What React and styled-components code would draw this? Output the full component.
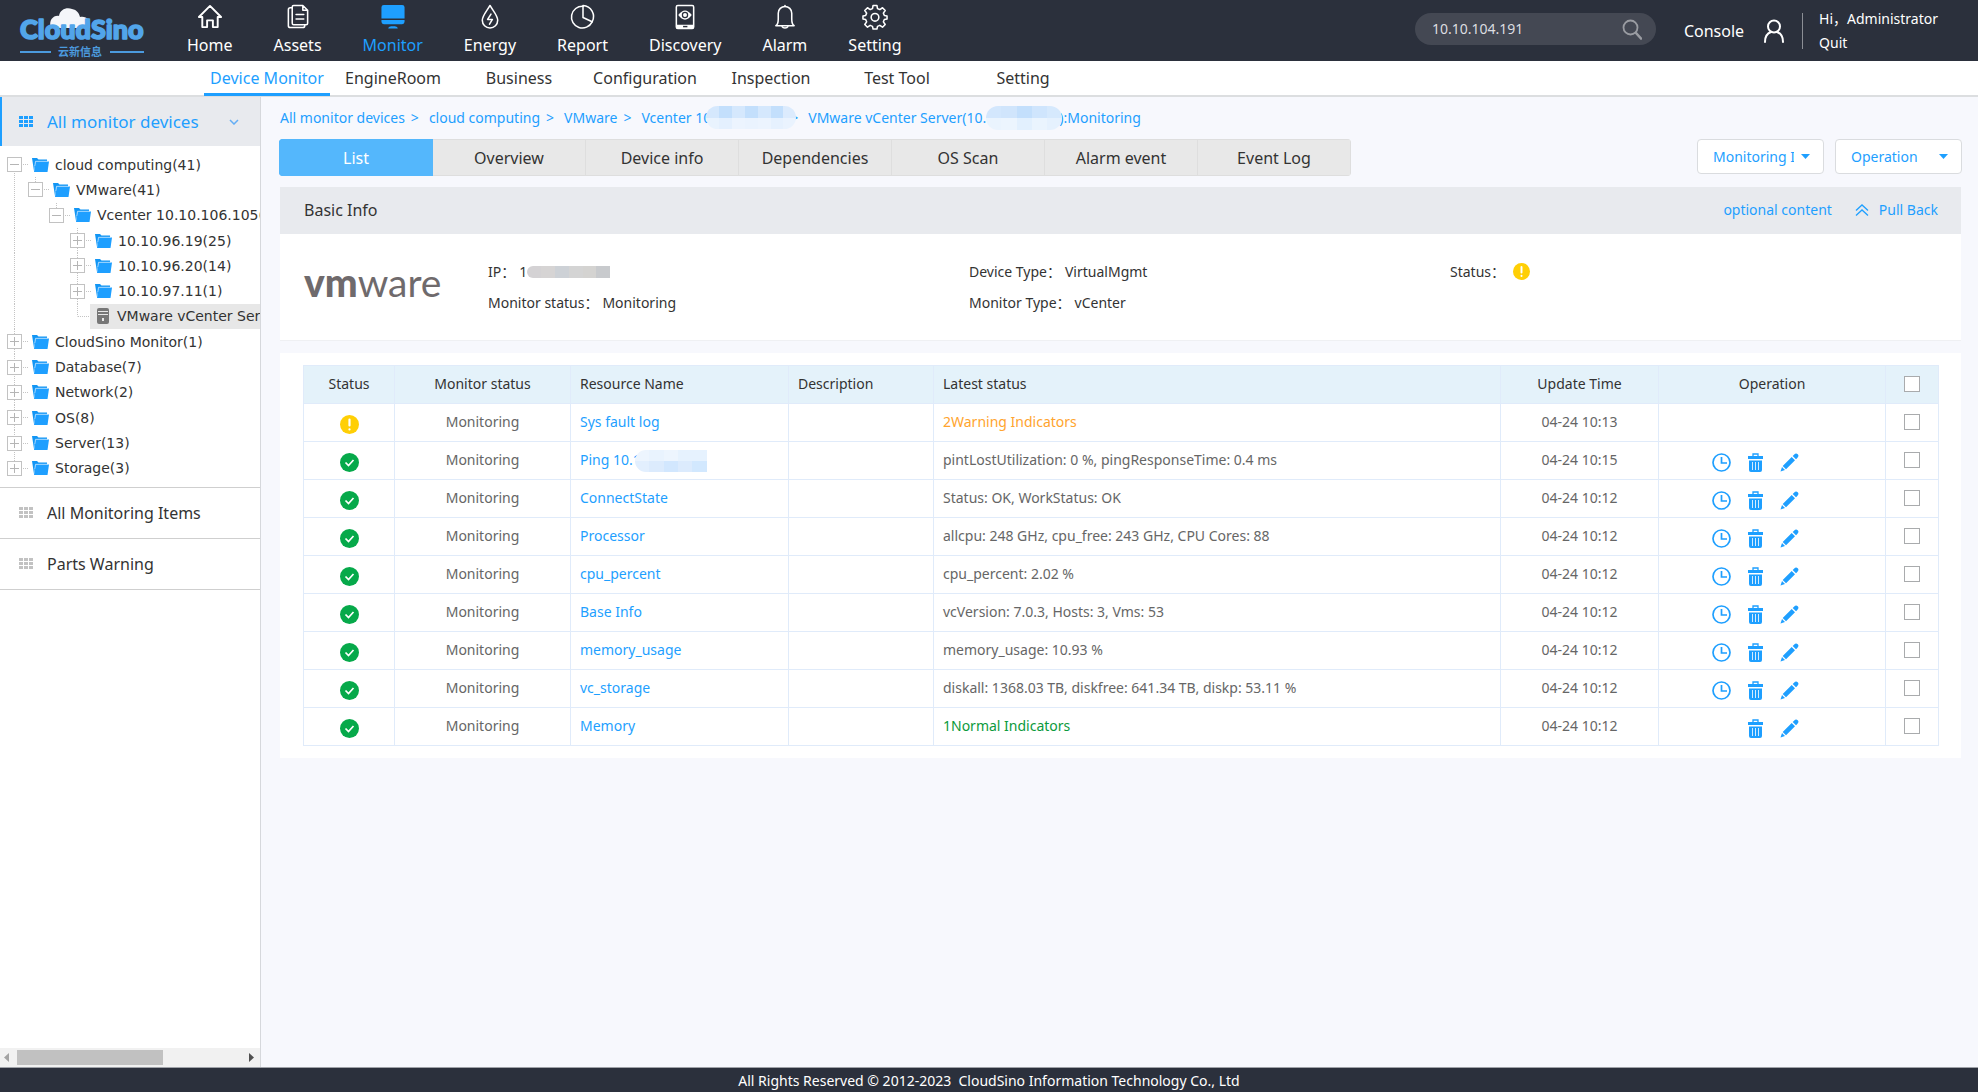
import React from "react";
import styled, { createGlobalStyle, css } from "styled-components";

const blue = "#1e9fff";
const sans = `"Noto Sans", "Noto Sans CJK SC", sans-serif`;

const GlobalStyle = createGlobalStyle`
  *, *::before, *::after { box-sizing: border-box; }
  body { margin: 0; font-family: ${sans}; font-size: 14px; line-height: 20px; color: #333; background: #f7f8fd; }
  a { color: inherit; text-decoration: none; }
  button, input, select { font: inherit; color: inherit; }
  button { padding: 0; border: 0; background: none; cursor: pointer; }
  svg { display: block; flex: none; }
`;

const Page = styled.div`
  display: flex;
  flex-direction: column;
  min-height: 100vh;
`;

/* ---------- Top bar ---------- */

const TopBar = styled.header`
  display: flex;
  align-items: center;
  height: 61px;
  padding-right: 40px;
  background: #2b303c;
  color: #fff;
`;

const LogoLink = styled.a`
  margin-left: 18px;
`;

const MainNav = styled.nav`
  display: flex;
  gap: 41px;
  margin-left: 39px;
`;

const NavLink = styled.a`
  display: flex;
  flex-direction: column;
  align-items: center;
  gap: 3px;
  font-size: 16px;
  line-height: 24px;
  color: ${(p) => (p.$active ? blue : "#fff")};
`;

const SearchBox = styled.form`
  display: flex;
  align-items: center;
  width: 241px;
  height: 32px;
  margin-left: auto;
  margin-bottom: 3px;
  padding: 0 14px 0 17px;
  border-radius: 16px;
  background: #444853;
`;

const SearchInput = styled.input`
  flex: 1;
  min-width: 0;
  padding: 0;
  border: 0;
  outline: 0;
  background: none;
  font-size: 14px;
  color: #dcdde0;
`;

const ConsoleLink = styled.a`
  display: flex;
  align-items: center;
  gap: 19px;
  margin-left: 28px;
  font-size: 16px;
`;

const UserBox = styled.div`
  display: flex;
  flex-direction: column;
  justify-content: space-between;
  height: 36px;
  margin-left: 17px;
  padding-left: 16px;
  border-left: 1px solid #8b8e95;
`;

const UserLine = styled.span`
  font-size: 14px;
  line-height: 12px;
`;

/* ---------- Second navigation row ---------- */

const SubNav = styled.nav`
  display: flex;
  height: 36px;
  padding-left: 204px;
  background: #fff;
  border-bottom: 2px solid #dcdee0;
`;

const SubNavLink = styled.a`
  width: 126px;
  height: 35px;
  border-bottom: 3px solid ${(p) => (p.$active ? blue : "transparent")};
  font-size: 16px;
  line-height: 34px;
  text-align: center;
  white-space: nowrap;
  color: ${(p) => (p.$active ? blue : "#333")};
`;

const Body = styled.div`
  display: flex;
  flex: 1;
`;

/* ---------- Sidebar ---------- */

const Sidebar = styled.aside`
  display: flex;
  flex-direction: column;
  width: 261px;
  flex: none;
  overflow: hidden;
  background: #fff;
  border-right: 1px solid #d6d8dc;
`;

const SideHeading = styled.button`
  display: flex;
  align-items: center;
  height: 49px;
  padding: 0 21px 0 17px;
  border-left: 2px solid ${blue};
  background: #e8eaee;
  font-size: 17px;
  color: ${blue};
`;

const SideLink = styled.a`
  display: flex;
  align-items: center;
  height: 51px;
  padding-left: 19px;
  border-bottom: 1px solid #cfcfcf;
  font-size: 16px;
  color: #333;
`;

const SideLabel = styled.span`
  flex: 1;
  margin-left: 14px;
  text-align: left;
`;

const Tree = styled.ul`
  display: grid;
  grid-auto-rows: 1fr;
  height: 342px;
  margin: 0;
  padding: 6px 0 6px 7px;
  list-style: none;
  border-bottom: 1px solid #cfcfcf;
`;

const TreeRow = styled.li`
  display: flex;
  min-width: 0;
  white-space: nowrap;
  overflow: hidden;
  font-family: "DejaVu Sans", sans-serif;
  font-size: 14px;
`;

const dots = "repeating-linear-gradient(to bottom, #c4c4c4 0 1px, transparent 1px 2px)";
const dotsAcross = "repeating-linear-gradient(to right, #c4c4c4 0 1px, transparent 1px 2px)";

const guides = {
  full: css`background: ${dots} 7px 0 / 1px 100% no-repeat;`,
  top: css`background: ${dots} 7px 0 / 1px 50% no-repeat;`,
  bottom: css`background: ${dots} 7px 100% / 1px 50% no-repeat;`,
};

const GuideCell = styled.span`
  display: flex;
  align-items: center;
  width: 15px;
  margin-right: 6px;
  flex: none;
  ${(p) => guides[p.$line]}
`;

const Expander = styled.button`
  display: flex;
  align-items: center;
  justify-content: center;
  width: 15px;
  height: 15px;
  border: 1px solid #c2c2c2;
  background: #fff;
`;

const Connector = styled.span`
  align-self: center;
  flex: none;
  width: ${(p) => (p.$long ? 12 : 5)}px;
  height: 1px;
  margin-left: ${(p) => (p.$long ? -13 : -5)}px;
  margin-right: ${(p) => (p.$long ? 0 : 4)}px;
  background: ${dotsAcross};
`;

const TreeLink = styled.a`
  display: flex;
  align-items: center;
  flex: none;
  gap: 6px;
  ${(p) =>
    p.$selected &&
    css`
      gap: 8px;
      padding-left: 7px;
      background: #e7e7e7;
    `}
`;

const ScrollTrack = styled.div`
  display: flex;
  align-items: center;
  gap: 8px;
  height: 19px;
  margin-top: auto;
  padding: 0 6px 0 4px;
  background: #f1f1f1;
`;

const ScrollThumb = styled.div`
  width: 146px;
  height: 15px;
  margin-right: auto;
  background: #c1c1c1;
`;

/* ---------- Main column ---------- */

const Main = styled.main`
  flex: 1;
  min-width: 0;
  padding: 9px 17px 0 19px;
`;

const Crumbs = styled.nav`
  display: flex;
  height: 24px;
  font-size: 14px;
  line-height: 24px;
  white-space: nowrap;
  color: ${blue};
`;

const CrumbArrow = styled.span`
  margin: 0 10px 0 ${(p) => (p.$tight ? 0 : 6)}px;
`;

const Mosaic = styled.span`
  display: inline-grid;
  position: relative;
  grid-template-columns: repeat(${(p) => p.$columns}, 1fr);
  width: ${(p) => p.$width}px;
  height: ${(p) => p.$height}px;
  margin: ${(p) => p.$margin};
  flex: none;
  vertical-align: middle;
  overflow: hidden;
  border-radius: ${(p) => p.$radius};
`;

const MosaicCell = styled.i`
  background: ${(p) => p.$color};
`;

const Toolbar = styled.div`
  display: flex;
  align-items: flex-start;
  gap: 11px;
  margin: 9px -1px 11px;
`;

const Tabs = styled.div`
  display: flex;
  width: 1072px;
  margin-right: auto;
  border-radius: 4px;
  overflow: hidden;
`;

const Tab = styled.button`
  flex: 1;
  height: 37px;
  border: 1px solid ${(p) => (p.$active ? "#54b7fc" : "#dedede")};
  border-left-width: ${(p) => (p.$first ? 1 : 0)}px;
  background: ${(p) => (p.$active ? "#54b7fc" : "#e8e8e8")};
  font-size: 16px;
  color: ${(p) => (p.$active ? "#fff" : "#333")};
`;

const SelectWrap = styled.label`
  display: grid;
  align-items: center;
  width: 127px;
  height: 35px;
  > * { grid-area: 1 / 1; }
  > svg { justify-self: end; margin-right: 14px; pointer-events: none; }
`;

const Select = styled.select`
  width: 100%;
  height: 100%;
  padding: 0 29px 0 15px;
  appearance: none;
  border: 1px solid #dadcdf;
  border-radius: 4px;
  background: #fff;
  font-size: 14px;
  color: ${blue};
`;

const PanelHeader = styled.div`
  display: flex;
  align-items: center;
  height: 47px;
  padding: 0 23px 2px 24px;
  background: #e8eaee;
`;

const PanelTitle = styled.h2`
  margin: 0 auto 0 0;
  font-size: 16px;
  font-weight: 400;
`;

const PanelAction = styled.button`
  display: flex;
  align-items: center;
  gap: 10px;
  margin-left: 23px;
  font-size: 14px;
  color: ${blue};
`;

const InfoPanel = styled.div`
  display: grid;
  grid-template-columns: 184px repeat(3, 1fr);
  padding: 22px 30px 22px 24px;
  background: #fff;
  border-bottom: 1px solid #eff0f3;
`;

const VendorLogo = styled.div`
  align-self: center;
  padding-bottom: 10px;
  font-family: Lato, sans-serif;
  font-size: 39px;
  line-height: 48px;
  color: #6f6a6c;
  b { font-weight: 900; }
`;

const InfoColumn = styled.dl`
  margin: 0;
`;

const InfoRow = styled.div`
  display: flex;
  align-items: center;
  gap: ${(p) => (p.$wide ? 8 : 4)}px;
  height: 31px;
`;

const InfoTerm = styled.dt`
  margin: 0;
`;

const InfoValue = styled.dd`
  display: flex;
  align-items: center;
  margin: 0;
`;

const TablePanel = styled.section`
  margin-top: 12px;
  padding: 12px 22px 12px 23px;
  background: #fff;
`;

const Table = styled.table`
  width: 100%;
  table-layout: fixed;
  border-collapse: collapse;
  color: #666;
`;

const Col = styled.col`
  width: ${(p) => (p.$width ? p.$width + "px" : "auto")};
`;

const cell = css`
  height: 38px;
  padding: 0 9px 1px;
  border: 1px solid #e0ebfa;
  font-size: 14px;
  font-weight: 400;
  text-align: ${(p) => (p.$center ? "center" : "left")};
`;

const HeadCell = styled.th`
  ${cell}
  background: #e4f2fa;
  color: #333;
`;

const Cell = styled.td`
  ${cell}
  color: ${(p) => p.$color || "#666"};
  > svg { margin: 4px auto 0; }
`;

const ResourceLink = styled.a`
  color: ${blue};
`;

const Actions = styled.div`
  display: flex;
  justify-content: flex-end;
  gap: 15px;
  padding: 4px 77px 0 0;
`;

const IconButton = styled.button`
  display: flex;
  justify-content: center;
  width: 19px;
  height: 19px;
  color: ${blue};
`;

const Checkbox = styled.input`
  display: block;
  width: 16px;
  height: 16px;
  margin: 0 auto;
  appearance: none;
  border: 1px solid #a9abad;
  background: #fff;
`;

const Footer = styled.footer`
  height: 25px;
  background: #2b303c;
  border-top: 1px solid #9fa2a8;
  font-size: 14px;
  line-height: 25px;
  text-align: center;
  white-space: pre;
  color: #fff;
`;

/* ---------- Drawings ---------- */

const BrandLogo = () => (
  <svg width="130" height="58" viewBox="0 0 130 58" role="img" aria-label="CloudSino">
    <path d="M33 26c-3-8 3-13 8-12 1-7 8-9 13-7 5 1 7 4 8 8 6-1 11 2 10 11z" fill="#f4f6fa" />
    <text x="2" y="37" fontFamily="Lato, sans-serif" fontWeight="900" fontSize="27" fill="#52a5ea" stroke="#52a5ea" strokeWidth="1.600" strokeLinejoin="round">CloudSino</text>
    <path d="M2 50h31M92 50h34" stroke="#4b9ade" strokeWidth="2" />
    <text x="40" y="54" fontFamily="Noto Sans CJK SC, sans-serif" fontWeight="700" fontSize="11" fill="#4b9ade">云新信息</text>
  </svg>
);

const line = { fill: "none", stroke: "currentColor", strokeWidth: 1.6, strokeLinejoin: "round", strokeLinecap: "round" };

const navIcons = {
  home: (
    <g {...line} strokeWidth="2">
      <path d="M1.500 13.500 13 2l11.500 11.500H21V24h-5v-7h-6v7H5V13.500z" />
    </g>
  ),
  assets: (
    <g {...line}>
      <path d="M7 5.500V3a1.500 1.500 0 0 1 1.500-1.500H18l5 5V20a1.500 1.500 0 0 1-1.500 1.500H8.500A1.500 1.500 0 0 1 7 20z M18 1.500v5h5" />
      <path d="M7 4H5a2 2 0 0 0-2 2v16.500a2 2 0 0 0 2 2h13a2 2 0 0 0 2-2v-.5M11 11h8M11 15.500h8" />
    </g>
  ),
  monitor: (
    <g fill="currentColor">
      <path d="M3.500 1h19A2.500 2.500 0 0 1 25 3.500V15H1V3.500A2.500 2.500 0 0 1 3.500 1zM1 16.500h24v2a2.500 2.500 0 0 1-2.500 2.500h-19A2.500 2.500 0 0 1 1 18.500zM8 25.500q0-2 3-2.500h4q3 .5 3 2.500z" />
    </g>
  ),
  energy: (
    <g {...line}>
      <path d="M13 1.500C10 7 5 12 5 17a8 8 0 0 0 16 0c0-5-5-10-8-15.500z" />
      <path d="M14 10.500 10.500 16h5L12.500 21" />
    </g>
  ),
  report: (
    <g {...line}>
      <path d="M13 2.300A11.300 11.300 0 1 0 22.500 18.500" />
      <path d="M13 1.500a11.500 11.500 0 0 1 9.500 17L13 14z" />
    </g>
  ),
  discovery: (
    <g>
      <rect x="4" y="1.500" width="18" height="24" rx="1.500" {...line} />
      <path d="M4 21.500h18v3a1 1 0 0 1-1 1H5a1 1 0 0 1-1-1z" fill="currentColor" />
      <path d="M11 22.700h4.500v1.500H11z" fill="#2b303c" />
      <path d="M6 11.500q7-9.500 14 0q-7 9.500-14 0z" fill="currentColor" />
      <circle cx="13" cy="11.500" r="2.700" fill="none" stroke="#2b303c" strokeWidth="1.300" />
    </g>
  ),
  alarm: (
    <g {...line}>
      <path d="M3.500 22.500c2.500-1.500 2.500-4 2.500-7V9.500a7 7 0 0 1 14 0v6c0 3 0 5.500 2.500 7z" />
      <path d="M13 2.500v-1M10 23.500a3.200 2.200 0 0 0 6 0" />
    </g>
  ),
  setting: (
    <g {...line}>
      <path d="M11 1.500h4l.6 3.300 2.400 1 2.800-1.900 2.800 2.800-1.900 2.800 1 2.400 2.800.6v3l-2.800.6-1 2.400 1.900 2.800-2.800 2.800-2.800-1.900-2.400 1-.6 2.800h-4l-.6-2.800-2.400-1-2.800 1.900-2.800-2.800 1.900-2.800-1-2.400-2.800-.6v-3l2.800-.6 1-2.400-1.900-2.800 2.800-2.800L8 5.800l2.400-1z" />
      <circle cx="13" cy="13.800" r="4" />
    </g>
  ),
};

const NavIcon = ({ name }) => (
  <svg width="26" height="26" viewBox="0 0 26 27" aria-hidden="true">{navIcons[name]}</svg>
);

const SearchIcon = () => (
  <svg width="20" height="21" viewBox="0 0 20 21" fill="none" stroke="#9a9ca2" aria-hidden="true">
    <circle cx="8.500" cy="8.500" r="7" strokeWidth="1.800" />
    <path d="m14 14 5 5.500" strokeWidth="2.600" strokeLinecap="round" />
  </svg>
);

const PersonIcon = () => (
  <svg width="22" height="24" viewBox="0 0 22 24" fill="none" stroke="#fff" strokeWidth="2" strokeLinecap="round" aria-hidden="true">
    <circle cx="11" cy="7.500" r="6" />
    <path d="M2 23q0-8 6-10M20 23q0-8-6-10" />
  </svg>
);

const GridIcon = () => (
  <svg width="14" height="12" viewBox="0 0 14 12" fill="currentColor" aria-hidden="true">
    {[0, 5, 10].map((x) => [0, 4, 8].map((y) => <rect key={`${x}-${y}`} x={x} y={y} width="4" height="3" />))}
  </svg>
);

const MutedGrid = styled.span`
  color: #c2c2c2;
`;

const ChevronIcon = () => (
  <svg width="10" height="6" viewBox="0 0 10 6" fill="none" stroke="#64aef5" strokeWidth="1.500" aria-hidden="true">
    <path d="m1 1 4 4 4-4" />
  </svg>
);

const SignIcon = ({ open }) => (
  <svg width="9" height="9" viewBox="0 0 9 9" stroke="#b5b5b5" aria-hidden="true">
    <path d={open ? "M0 4.500h9" : "M0 4.500h9M4.500 0v9"} />
  </svg>
);

const FolderIcon = () => (
  <svg width="17" height="14" viewBox="0 0 17 14" aria-hidden="true">
    <path d="M0 0h5l1.500 1.500H15v2H3.500L2 13z" fill="#1296f5" />
    <path d="M3.500 3.500H17L15.500 14H2z" fill={blue} />
    <path d="M2.800 8 3.500 3.300H16" fill="none" stroke="#b9e0ff" strokeWidth=".8" />
  </svg>
);

const ServerIcon = () => (
  <svg width="12" height="16" viewBox="0 0 12 16" aria-hidden="true">
    <rect width="12" height="16" rx="2" fill="#777" />
    <path d="M1 3.500h10M1 6.500h10" stroke="#e7e7e7" />
    <rect x="5" y="10" width="2" height="3" fill="#e7e7e7" />
  </svg>
);

const ArrowIcon = ({ left }) => (
  <svg width="5" height="9" viewBox="0 0 5 9" fill={left ? "#a3a3a3" : "#505050"} aria-hidden="true">
    <path d={left ? "M5 0v9L0 4.500z" : "M0 0v9l5-4.500z"} />
  </svg>
);

const CaretIcon = () => (
  <svg width="9" height="5" viewBox="0 0 9 5" fill={blue} aria-hidden="true">
    <path d="M0 0h9L4.500 5z" />
  </svg>
);

const PullBackIcon = () => (
  <svg width="14" height="12" viewBox="0 0 14 12" fill="none" stroke={blue} strokeWidth="1.300" aria-hidden="true">
    <path d="m1 6.500 6-5.500 6 5.500M1 11.500 7 6l6 5.500" />
  </svg>
);

const WarningIcon = ({ size = 19 }) => (
  <svg width={size} height={size} viewBox="0 0 19 19" role="img" aria-label="Warning">
    <circle cx="9.500" cy="9.500" r="9.500" fill="#ffcf05" />
    <path d="M9.500 4.500v6M9.500 14.300v.2" stroke="#fff" strokeWidth="2.200" strokeLinecap="round" />
  </svg>
);

const NormalIcon = () => (
  <svg width="19" height="19" viewBox="0 0 19 19" role="img" aria-label="Normal">
    <circle cx="9.500" cy="9.500" r="9.500" fill="#06a94a" />
    <path d="m5.500 9.500 3 3 5-5.500" fill="none" stroke="#fff" strokeWidth="1.700" />
  </svg>
);

const ClockIcon = () => (
  <svg width="19" height="19" viewBox="0 0 19 19" fill="none" stroke="currentColor" strokeWidth="1.700" aria-hidden="true">
    <circle cx="9.500" cy="9.500" r="8.500" />
    <path d="M9.500 4v6H15" />
  </svg>
);

const TrashIcon = () => (
  <svg width="15" height="19" viewBox="0 0 15 19" aria-hidden="true">
    <path d="M5 3V1h5v2" fill="none" stroke="currentColor" strokeWidth="1.300" />
    <path d="M0 3h15v3H0zM1 7.500h13V17a2 2 0 0 1-2 2H3a2 2 0 0 1-2-2z" fill="currentColor" />
    <path d="M4.500 9v8M7.500 9v8M10.500 9v8" stroke="#d5ecff" />
  </svg>
);

const PencilIcon = () => (
  <svg width="19" height="19" viewBox="0 0 19 19" fill="currentColor" aria-hidden="true">
    <path d="M14 1.700q2-2 3.700-.4t-.4 3.700L16 6.300 12.700 3zM11.700 4 15 7.300 6 16.300 2.700 13zM2 14l3 3-4.500 1.500z" />
  </svg>
);

/* ---------- Data ---------- */

const mainNav = [
  ["Home", "home"],
  ["Assets", "assets"],
  ["Monitor", "monitor"],
  ["Energy", "energy"],
  ["Report", "report"],
  ["Discovery", "discovery"],
  ["Alarm", "alarm"],
  ["Setting", "setting"],
];

const subNav = ["Device Monitor", "EngineRoom", "Business", "Configuration", "Inspection", "Test Tool", "Setting"];

const tree = [
  { lines: ["bottom"], open: true, label: "cloud computing(41)" },
  { lines: ["full", "top"], open: true, label: "VMware(41)" },
  { lines: ["full", "none", "top"], open: true, label: "Vcenter 10.10.106.105(" },
  { lines: ["full", "none", "none", "full"], label: "10.10.96.19(25)" },
  { lines: ["full", "none", "none", "full"], label: "10.10.96.20(14)" },
  { lines: ["full", "none", "none", "full"], label: "10.10.97.11(1)" },
  { lines: ["full", "none", "none", "top"], leaf: true, label: "VMware vCenter Server" },
  { lines: ["full"], label: "CloudSino Monitor(1)" },
  { lines: ["full"], label: "Database(7)" },
  { lines: ["full"], label: "Network(2)" },
  { lines: ["full"], label: "OS(8)" },
  { lines: ["full"], label: "Server(13)" },
  { lines: ["top"], label: "Storage(3)" },
];

const tabs = ["List", "Overview", "Device info", "Dependencies", "OS Scan", "Alarm event", "Event Log"];

const columns = [
  { label: "Status", width: 91, center: true },
  { label: "Monitor status", width: 176, center: true },
  { label: "Resource Name", width: 218 },
  { label: "Description", width: 145 },
  { label: "Latest status" },
  { label: "Update Time", width: 158, center: true },
  { label: "Operation", width: 227, center: true },
];

const rows = [
  { warn: true, name: "Sys fault log", latest: "2Warning Indicators", color: "#ffa42e", time: "04-24 10:13", actions: [] },
  { name: "Ping 10.1", masked: true, latest: "pintLostUtilization: 0 %, pingResponseTime: 0.4 ms", time: "04-24 10:15" },
  { name: "ConnectState", latest: "Status: OK, WorkStatus: OK" },
  { name: "Processor", latest: "allcpu: 248 GHz, cpu_free: 243 GHz, CPU Cores: 88" },
  { name: "cpu_percent", latest: "cpu_percent: 2.02 %" },
  { name: "Base Info", latest: "vcVersion: 7.0.3, Hosts: 3, Vms: 53" },
  { name: "memory_usage", latest: "memory_usage: 10.93 %" },
  { name: "vc_storage", latest: "diskall: 1368.03 TB, diskfree: 641.34 TB, diskp: 53.11 %" },
  { name: "Memory", latest: "1Normal Indicators", color: "#0b9a3c", actions: ["Delete", "Edit"] },
];

const actionIcons = { History: ClockIcon, Delete: TrashIcon, Edit: PencilIcon };

const masks = {
  crumb: {
    width: 90, height: 23, radius: "12px", margin: "0 -6px 0 -5px",
    colors: [["#d5e8fd", "#c3dffc", "#d5e8fd", "#c3dffc", "#d5e8fd", "#c3dffc", "#dcebfd"], ["#e9f3fe", "#e4f0fe", "#ecf4fe", "#eaf3fe", "#ecf4fe", "#e6f1fe", "#eaf3fe"]],
  },
  crumbEnd: {
    width: 76, height: 24, radius: "12px", margin: "0 -3px 0 -8px",
    colors: [["#d3e7fd", "#d0e5fc", "#c3dffc", "#cfe5fd", "#d6e9fd"], ["#eaf4fe", "#ecf5fe", "#e2f0fe", "#eaf4fe", "#e5f1fe"]],
  },
  ip: {
    width: 83, height: 12, radius: "6px 0 0 6px", margin: "0",
    colors: [["#d4d2d4", "#d6d4d4", "#cdd1d6", "#d4d4d4", "#d4d3d1", "#c8cacd"]],
  },
  ping: {
    width: 72, height: 22, radius: "12px 0 0 12px", margin: "-4px 0 -4px -6px",
    colors: [["#edf5fe", "#e9f3fe", "#edf5fe", "#e6f2fe", "#e6f2fe"], ["#e2effe", "#dcebfd", "#d2e7fe", "#dcebfd", "#d2e8fe"]],
  },
};

const Redaction = ({ kind }) => {
  const { width, height, radius, margin, colors } = masks[kind];
  return (
    <Mosaic $columns={colors[0].length} $width={width} $height={height} $radius={radius} $margin={margin} aria-hidden="true">
      {colors.flat().map((color, i) => <MosaicCell key={i} $color={color} />)}
    </Mosaic>
  );
};

const TreeItem = ({ lines, open, leaf, label }) => (
  <TreeRow>
    {lines.map((type, i) => (
      <GuideCell key={i} $line={type}>
        {i === lines.length - 1 && !leaf && (
          <Expander aria-label={open ? `Collapse ${label}` : `Expand ${label}`}><SignIcon open={open} /></Expander>
        )}
      </GuideCell>
    ))}
    <Connector $long={leaf} />
    <TreeLink href="#" $selected={leaf}>
      {leaf ? <ServerIcon /> : <FolderIcon />}
      {label}
    </TreeLink>
  </TreeRow>
);

const Dropdown = ({ label }) => (
  <SelectWrap>
    <Select aria-label={label}><option>{label}</option></Select>
    <CaretIcon />
  </SelectWrap>
);

export default function App() {
  return (
    <Page>
      <GlobalStyle />
      <TopBar>
        <LogoLink href="#"><BrandLogo /></LogoLink>
        <MainNav>
          {mainNav.map(([label, icon]) => (
            <NavLink key={label} href="#" $active={icon === "monitor"}><NavIcon name={icon} />{label}</NavLink>
          ))}
        </MainNav>
        <SearchBox>
          <SearchInput aria-label="Search" defaultValue="10.10.104.191" />
          <SearchIcon />
        </SearchBox>
        <ConsoleLink href="#">Console<PersonIcon /></ConsoleLink>
        <UserBox>
          <UserLine>Hi，Administrator</UserLine>
          <UserLine as="a" href="#">Quit</UserLine>
        </UserBox>
      </TopBar>
      <SubNav>
        {subNav.map((label, i) => <SubNavLink key={label} href="#" $active={i === 0}>{label}</SubNavLink>)}
      </SubNav>
      <Body>
        <Sidebar>
          <SideHeading>
            <GridIcon />
            <SideLabel>All monitor devices</SideLabel>
            <ChevronIcon />
          </SideHeading>
          <Tree>{tree.map((item) => <TreeItem key={item.label} {...item} />)}</Tree>
          <SideLink href="#"><MutedGrid><GridIcon /></MutedGrid><SideLabel>All Monitoring Items</SideLabel></SideLink>
          <SideLink href="#"><MutedGrid><GridIcon /></MutedGrid><SideLabel>Parts Warning</SideLabel></SideLink>
          <ScrollTrack><ArrowIcon left /><ScrollThumb /><ArrowIcon /></ScrollTrack>
        </Sidebar>
        <Main>
          <Crumbs aria-label="Breadcrumb">
            <a href="#">All monitor devices</a><CrumbArrow>&gt;</CrumbArrow>
            <a href="#">cloud computing</a><CrumbArrow>&gt;</CrumbArrow>
            <a href="#">VMware</a><CrumbArrow>&gt;</CrumbArrow>
            <a href="#">Vcenter 10</a><Redaction kind="crumb" /><CrumbArrow $tight>&gt;</CrumbArrow>
            <a href="#">VMware vCenter Server(10.1</a><Redaction kind="crumbEnd" /><a href="#">):Monitoring</a>
          </Crumbs>
          <Toolbar>
            <Tabs role="tablist">
              {tabs.map((label, i) => (
                <Tab key={label} role="tab" aria-selected={i === 0} $active={i === 0} $first={i === 0}>{label}</Tab>
              ))}
            </Tabs>
            <Dropdown label="Monitoring Items" />
            <Dropdown label="Operation" />
          </Toolbar>
          <section>
            <PanelHeader>
              <PanelTitle>Basic Info</PanelTitle>
              <PanelAction>optional content</PanelAction>
              <PanelAction><PullBackIcon />Pull Back</PanelAction>
            </PanelHeader>
            <InfoPanel>
              <VendorLogo><b>vm</b>ware</VendorLogo>
              <InfoColumn>
                <InfoRow><InfoTerm>IP：</InfoTerm><InfoValue>1<Redaction kind="ip" /></InfoValue></InfoRow>
                <InfoRow><InfoTerm>Monitor status：</InfoTerm><InfoValue>Monitoring</InfoValue></InfoRow>
              </InfoColumn>
              <InfoColumn>
                <InfoRow><InfoTerm>Device Type：</InfoTerm><InfoValue>VirtualMgmt</InfoValue></InfoRow>
                <InfoRow><InfoTerm>Monitor Type：</InfoTerm><InfoValue>vCenter</InfoValue></InfoRow>
              </InfoColumn>
              <InfoColumn>
                <InfoRow $wide><InfoTerm>Status：</InfoTerm><InfoValue><WarningIcon size={17} /></InfoValue></InfoRow>
              </InfoColumn>
            </InfoPanel>
          </section>
          <TablePanel>
            <Table>
              <colgroup>
                {columns.map((c) => <Col key={c.label} $width={c.width} />)}
                <Col $width={53} />
              </colgroup>
              <thead>
                <tr>
                  {columns.map((c) => <HeadCell key={c.label} $center={c.center}>{c.label}</HeadCell>)}
                  <HeadCell><Checkbox type="checkbox" aria-label="Select all" /></HeadCell>
                </tr>
              </thead>
              <tbody>
                {rows.map((r) => (
                  <tr key={r.name}>
                    <Cell $center>{r.warn ? <WarningIcon /> : <NormalIcon />}</Cell>
                    <Cell $center>Monitoring</Cell>
                    <Cell><ResourceLink href="#">{r.name}</ResourceLink>{r.masked && <Redaction kind="ping" />}</Cell>
                    <Cell />
                    <Cell $color={r.color}>{r.latest}</Cell>
                    <Cell $center>{r.time || "04-24 10:12"}</Cell>
                    <Cell>
                      <Actions>
                        {(r.actions || ["History", "Delete", "Edit"]).map((name) => {
                          const Icon = actionIcons[name];
                          return <IconButton key={name} aria-label={name}><Icon /></IconButton>;
                        })}
                      </Actions>
                    </Cell>
                    <Cell><Checkbox type="checkbox" aria-label={`Select ${r.name}`} /></Cell>
                  </tr>
                ))}
              </tbody>
            </Table>
          </TablePanel>
        </Main>
      </Body>
      <Footer>All Rights Reserved © 2012-2023  CloudSino Information Technology Co., Ltd</Footer>
    </Page>
  );
}
